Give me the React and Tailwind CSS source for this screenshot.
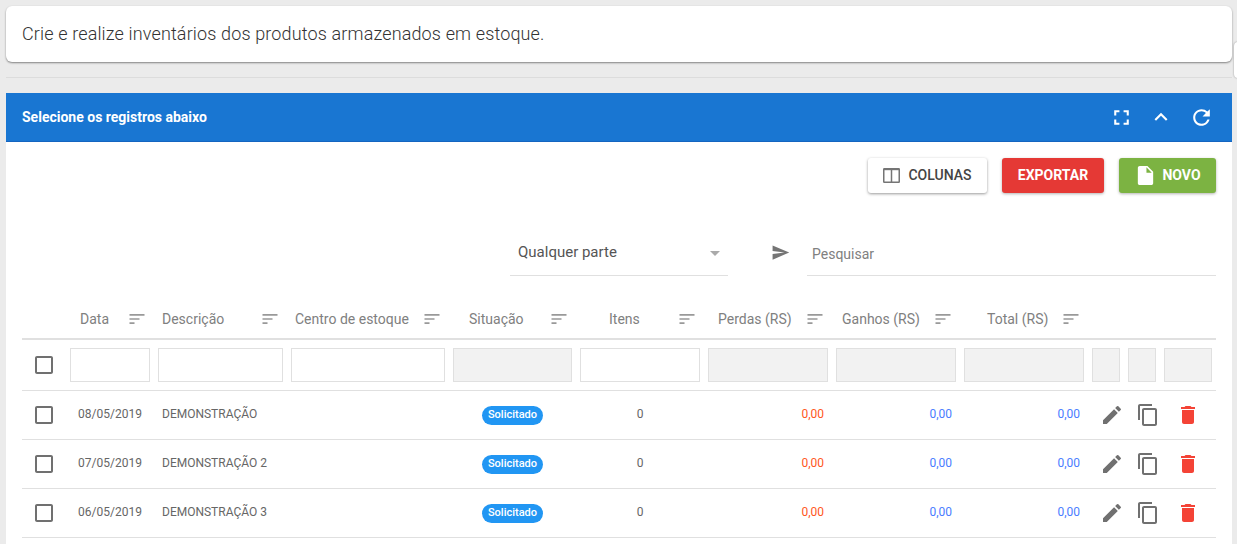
import React from "react";
import {
  MdFullscreen, MdExpandLess, MdRefresh, MdInsertDriveFile, MdSend, MdEdit,
  MdContentCopy, MdDelete, MdArrowDropDown, MdSort, MdCheckBoxOutlineBlank,
} from "react-icons/md";

const cols = "grid grid-cols-[44px_88px_133px_162px_127px_128px_128px_128px_128px_36px_36px_56px]";

const headers = [
  { t: "Data", c: "pl-[14px]" },
  { t: "Descrição", c: "pl-2" },
  { t: "Centro de estoque", c: "pl-2" },
  { t: "Situação", c: "pl-5" },
  { t: "Itens", c: "pl-[33px]" },
  { t: "Perdas (RS)", c: "pl-[14px]" },
  { t: "Ganhos (RS)", c: "pl-[10px]" },
  { t: "Total (RS)", c: "pl-[27px]" },
];

const filters = [
  false, false, false, true, false, true, true, true, true, true, true,
];

const rows = [
  ["08/05/2019", "DEMONSTRAÇÃO"],
  ["07/05/2019", "DEMONSTRAÇÃO 2"],
  ["06/05/2019", "DEMONSTRAÇÃO 3"],
];

function ColumnsIcon() {
  return (
    <svg width="17" height="15" viewBox="0 0 17 15" fill="none" stroke="#757575" strokeWidth="1.5">
      <rect x="0.75" y="0.75" width="15.5" height="13.5" rx="0.5" />
      <path d="M8.5 1v13" />
      <path d="M1 1.2h15" strokeWidth="2" />
    </svg>
  );
}

export default function App() {
  return (
    <div className="relative h-[544px] overflow-hidden bg-[#ebebeb] px-[6px] pt-[6px] font-['Roboto',sans-serif]">
      <div className="absolute right-[-6px] top-[42px] h-[36px] w-[9px] rounded-l bg-white shadow-[0_0_2px_rgba(0,0,0,0.4)]" />
      <div className="relative flex h-[56px] w-[1226px] items-center rounded-md bg-white pb-px pl-4 text-[18px] font-light tracking-[0.14px] text-[#333] shadow-[0_1px_2px_rgba(0,0,0,0.45)]">
        Crie e realize inventários dos produtos armazenados em estoque.
      </div>
      <div className="mt-[15px] h-px w-[1226px] bg-[#dcdcdc]" />
      <div className="mt-[15px] w-[1226px] bg-white">
        <div className="flex h-[49px] items-center justify-between border-b border-[#1565c0] bg-[#1976d2] pl-4 pr-[11px]">
          <span className="text-[14px] font-bold text-white">Selecione os registros abaixo</span>
          <div className="flex items-center text-white">
            <span className="flex w-10 justify-center"><MdFullscreen size={25} /></span>
            <span className="flex w-10 justify-center"><MdExpandLess size={26} /></span>
            <span className="flex w-10 justify-center"><MdRefresh size={25} /></span>
          </div>
        </div>

        <div className="px-4">
          <div className="flex justify-end gap-[15px] pt-4">
            <button className="flex h-[35px] w-[119px] items-center justify-center gap-2 rounded-[3px] bg-white text-[14px] font-medium text-[#444] shadow-[0_1px_3px_rgba(0,0,0,0.4)]">
              <ColumnsIcon />
              COLUNAS
            </button>
            <button className="h-[35px] w-[102px] rounded-[3px] bg-[#e53935] text-[14px] font-bold text-white shadow-[0_1px_3px_rgba(0,0,0,0.3)]">
              EXPORTAR
            </button>
            <button className="flex h-[35px] w-[97px] items-center justify-center gap-[5px] rounded-[3px] bg-[#7cb342] text-[14px] font-bold text-white shadow-[0_1px_3px_rgba(0,0,0,0.3)]">
              <MdInsertDriveFile size={23} />
              NOVO
            </button>
          </div>

          <div className="mt-[39px] flex h-[44px] items-stretch pl-[488px]">
            <div className="relative flex w-[218px] items-center border-b border-[#e0e0e0] pb-[2px] pl-2 text-[15px] text-[#555]">
              Qualquer parte
              <MdArrowDropDown size={24} className="absolute right-[1px] top-[9px] text-[#aaaaaa]" />
            </div>
            <div className="flex w-[79px] items-center justify-start pb-[4px] pl-[43px] text-[#757575]">
              <MdSend size={19} />
            </div>
            <div className="flex flex-1 items-center border-b border-[#e0e0e0] pl-[5px] pt-[2px] text-[14px] text-[#808080]">
              Pesquisar
            </div>
          </div>

          <div className={`${cols} mt-[20px] h-[44px] border-b-2 border-[#e0e0e0] pt-1 text-[14px] text-[#808080]`}>
            <div />
            {headers.map((h) => (
              <div key={h.t} className={`flex items-center pr-[7px] ${h.c}`}>
                <span className="whitespace-nowrap">{h.t}</span>
                <MdSort size={20} className="ml-auto shrink-0 text-[#999]" />
              </div>
            ))}
            <div />
            <div />
            <div />
          </div>

          <div className={`${cols} h-[51px] items-center border-b border-[#e0e0e0]`}>
            <div className="flex justify-center text-[#707070]">
              <MdCheckBoxOutlineBlank size={24} />
            </div>
            {filters.map((off, i) => (
              <div key={i} className="px-1">
                <div className={`h-[34px] border border-[#e0e0e0] ${off ? "bg-[#f2f2f2]" : "bg-white"}`} />
              </div>
            ))}
          </div>

          {rows.map(([d, name]) => (
            <div key={d} className={`${cols} h-[49px] items-center border-b border-[#e0e0e0] text-[12px] text-[#666]`}>
              <div className="flex justify-center text-[#707070]">
                <MdCheckBoxOutlineBlank size={24} />
              </div>
              <div className="mb-[2px] text-center">{d}</div>
              <div className="mb-[2px] pl-2 whitespace-nowrap">{name}</div>
              <div />
              <div className="flex justify-center">
                <span className="flex h-[19px] w-[61px] items-center justify-center rounded-full bg-[#2196f3] text-[11px] font-medium text-white">
                  Solicitado
                </span>
              </div>
              <div className="mb-[2px] text-center">0</div>
              <div className="mb-[2px] pr-2 text-right text-[#ff5722]">0,00</div>
              <div className="mb-[2px] pr-2 text-right text-[#4a7dff]">0,00</div>
              <div className="mb-[2px] pr-2 text-right text-[#4a7dff]">0,00</div>
              <div className="flex justify-end text-[#707070]"><MdEdit size={24} /></div>
              <div className="flex justify-end text-[#707070]"><MdContentCopy size={24} /></div>
              <div className="flex justify-center text-[#f44336]"><MdDelete size={24} /></div>
            </div>
          ))}
        </div>
        <div className="h-10" />
      </div>
    </div>
  );
}
